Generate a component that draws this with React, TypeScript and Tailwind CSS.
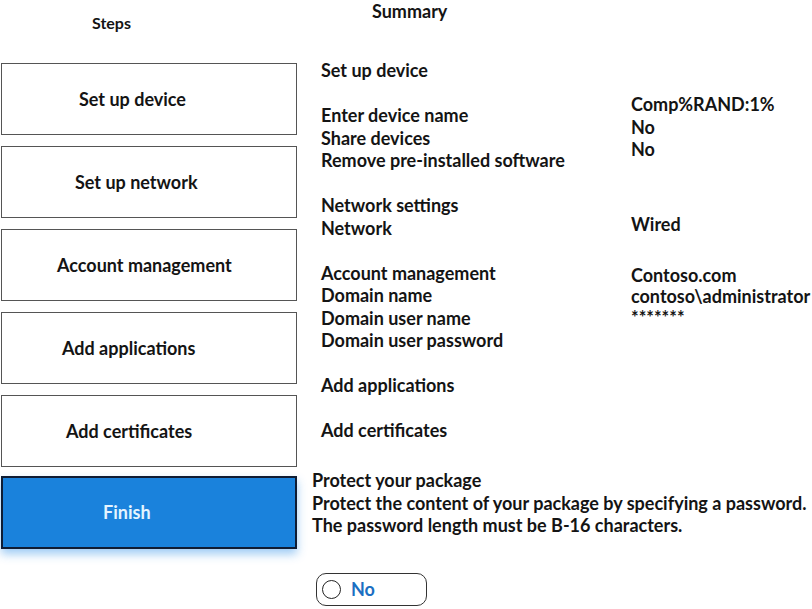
const steps = [
  { label: "Set up device", pad: "pl-[77px]" },
  { label: "Set up network", pad: "pl-[73px]" },
  { label: "Account management", pad: "pl-[55px]" },
  { label: "Add applications", pad: "pl-[60px]" },
  { label: "Add certificates", pad: "pl-[64px]" },
];

type Section = {
  labels: string[];
  values: string[];
  valueTop: string;
  valueLeading: string;
};

const sections: Section[] = [
  {
    labels: ["Set up device", "", "Enter device name", "Share devices", "Remove pre-installed software"],
    values: ["Comp%RAND:1%", "No", "No"],
    valueTop: "pt-[34px]",
    valueLeading: "leading-[22.5px]",
  },
  {
    labels: ["Network settings", "Network"],
    values: ["Wired"],
    valueTop: "pt-[19px]",
    valueLeading: "leading-[22.5px]",
  },
  {
    labels: ["Account management", "Domain name", "Domain user name", "Domain user password"],
    values: ["Contoso.com", "contoso\\administrator", "*******"],
    valueTop: "pt-[3px]",
    valueLeading: "leading-[21px]",
  },
  { labels: ["Add applications"], values: [], valueTop: "", valueLeading: "" },
  { labels: ["Add certificates"], values: [], valueTop: "", valueLeading: "" },
];

const SummarySection = ({ section }: { section: Section }) => (
  <div className="flex">
    <div className="w-[310px] flex flex-col leading-[22.5px]">
      {section.labels.map((l, i) => (
        <div key={i} className="h-[22.5px] whitespace-nowrap">
          {l}
        </div>
      ))}
    </div>
    <div className={`flex flex-col ${section.valueTop} ${section.valueLeading}`}>
      {section.values.map((v, i) => (
        <div key={i} className="whitespace-nowrap">
          {v}
        </div>
      ))}
    </div>
  </div>
);

export default function App() {
  return (
    <div className="w-[812px] h-[609px] bg-white text-[#141414] font-['Lato',sans-serif] font-bold overflow-hidden flex">
      {/* steps */}
      <div className="w-[296px] ml-[1px] flex flex-col shrink-0">
        <div className="pl-[91px] pt-[13px] leading-[20px] text-[16px]">Steps</div>
        <div className="mt-[30px] flex flex-col gap-[11px]">
          {steps.map((s) => (
            <div
              key={s.label}
              className={`h-[72px] border-[1.5px] border-[#555] bg-white flex items-center text-[18px] ${s.pad}`}
            >
              {s.label}
            </div>
          ))}
          <div className="h-[73px] -mt-[2px] border-2 border-[#0f1c33] bg-[#1a82dc] text-[#e4f4ff] flex items-center pl-[100px] text-[18px] shadow-[0_5px_9px_rgba(40,140,230,0.45)]">
            Finish
          </div>
        </div>
      </div>

      {/* summary */}
      <div className="ml-[24px] flex flex-col text-[18px]">
        <div className="ml-[51px] leading-[22px] text-[18px]">Summary</div>
        <div className="mt-[37px] flex flex-col gap-[22.5px]">
          {sections.map((s, i) => (
            <SummarySection key={i} section={s} />
          ))}
        </div>
        <div className="-ml-[9px] mt-[27.5px] leading-[22.5px] whitespace-nowrap">
          <div>Protect your package</div>
          <div>Protect the content of your package by specifying a password.</div>
          <div>The password length must be B-16 characters.</div>
        </div>
        <div className="-ml-[5px] mt-[36px] w-[111px] h-[33px] border-[1.5px] border-[#333] rounded-[10px] flex items-center pl-[5px] gap-[10px]">
          <div className="w-[19px] h-[19px] rounded-full border-[1.5px] border-[#222]" />
          <span className="text-[#1b6fc2] text-[18px]">No</span>
        </div>
      </div>
    </div>
  );
}
